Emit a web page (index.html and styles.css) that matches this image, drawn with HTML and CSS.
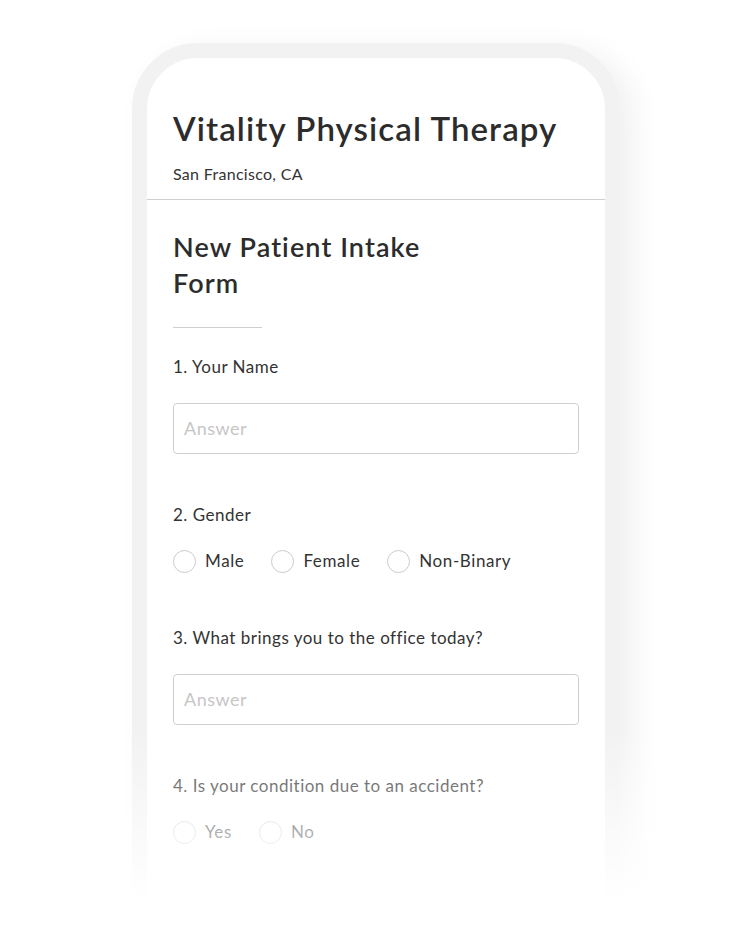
FILE: index.html
```html
<!DOCTYPE html>
<html lang="en">
<head>
    <meta charset="UTF-8">
    <meta name="viewport" content="width=device-width, initial-scale=1.0">
    <title>Vitality Physical Therapy - Intake</title>
    <link rel="stylesheet" href="styles.css">
</head>
<body>
    <div class="stage">
        <div class="phone">
            <div class="screen">
                <div class="clinic">
                    <h1 class="clinic__name">Vitality Physical Therapy</h1>
                    <p class="clinic__place">San Francisco, CA</p>
                </div>
                <div class="form">
                    <h2 class="form__title">New Patient Intake<br>Form</h2>
                    <hr class="form__rule">

                    <div class="field">
                        <p class="field__label">1. Your Name</p>
                        <div class="answer">Answer</div>
                    </div>

                    <div class="field">
                        <p class="field__label">2. Gender</p>
                        <div class="choices">
                            <span class="choice"><i class="radio"></i>Male</span>
                            <span class="choice"><i class="radio"></i>Female</span>
                            <span class="choice"><i class="radio"></i>Non-Binary</span>
                        </div>
                    </div>

                    <div class="field field--after-choices">
                        <p class="field__label">3. What brings you to the office today?</p>
                        <div class="answer">Answer</div>
                    </div>

                    <div class="field">
                        <p class="field__label">4. Is your condition due to an accident?</p>
                        <div class="choices">
                            <span class="choice"><i class="radio"></i>Yes</span>
                            <span class="choice"><i class="radio"></i>No</span>
                        </div>
                    </div>

                    <div class="field field--after-choices">
                        <p class="field__label">5. Have you had physical therapy before?</p>
                    </div>
                </div>
            </div>
        </div>
        <!-- white fade over the bottom of the phone -->
        <div class="fade"></div>
    </div>
</body>
</html>
```

FILE: styles.css
```css
*{
    margin: 0;
    padding: 0;
    box-sizing: border-box;
}
body {
    background: #fff;
    font-family: Lato, "Open Sans", sans-serif;
    color: #333;
}

.stage {
    position: relative;
    height: 938px;
    overflow: hidden;
    padding-top: 43px;
}

.phone {
    margin-left: 132px;
    width: 488px;
    height: 1000px;
    border: 15px solid #f2f2f2;
    border-radius: 66px;
    background: #fff;
    box-shadow: 14px 6px 30px rgba(0, 0, 0, 0.06);
}

.screen {
    border-radius: 51px 51px 0 0;
    overflow: hidden;
}

/* header */
.clinic {
    padding: 50px 26px 15px;
    border-bottom: 1px solid #cfcfcf;
}
.clinic__name {
    font-size: 33px;
    line-height: 40px;
    font-weight: 600;
    letter-spacing: 1.1px;
    color: #2c2c2c;
}
.clinic__place {
    margin-top: 16px;
    font-size: 16px;
    line-height: 20px;
    letter-spacing: 0.3px;
    color: #333;
}

/* form */
.form {
    padding: 0 26px;
}
.form__title {
    margin-top: 29px;
    font-size: 27px;
    line-height: 36px;
    font-weight: 600;
    letter-spacing: 1.1px;
    color: #2c2c2c;
}
.form__rule {
    margin-top: 26px;
    width: 89px;
    border: 0;
    border-top: 1px solid #cfcfcf;
}

.field {
    margin-top: 50px;
}
.form__rule + .field {
    margin-top: 28px;
}
.field--after-choices {
    margin-top: 54px;
}
.field__label {
    font-size: 17px;
    line-height: 22px;
    letter-spacing: 0.5px;
    color: #333;
}

.answer {
    margin-top: 25px;
    height: 51px;
    border: 1px solid #cfcfcf;
    border-radius: 4px;
    padding: 0 10px;
    font-size: 18px;
    line-height: 49px;
    letter-spacing: 0.5px;
    color: #c6c6c6;
}

.choices {
    margin-top: 23px;
    display: flex;
    gap: 27px;
}
.choice {
    display: flex;
    align-items: center;
    gap: 9px;
    font-size: 17px;
    line-height: 24px;
    letter-spacing: 0.6px;
    color: #333;
}
.radio {
    width: 23px;
    height: 23px;
    border: 1px solid #cccccc;
    border-radius: 50%;
}

.fade {
    position: absolute;
    left: 0;
    right: 0;
    top: 728px;
    height: 210px;
    background: linear-gradient(rgba(255, 255, 255, 0), #fff 172px);
}
```
